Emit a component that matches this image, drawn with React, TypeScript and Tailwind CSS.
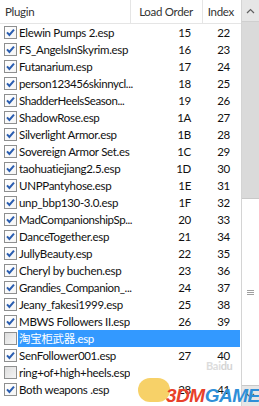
import React from 'react';

type Row = { name: string; on: boolean; order?: string; index?: string; selected?: boolean };

const rows: Row[] = [
  { name: 'Elewin Pumps 2.esp', on: true, order: '15', index: '22' },
  { name: 'FS_AngelsInSkyrim.esp', on: true, order: '16', index: '23' },
  { name: 'Futanarium.esp', on: true, order: '17', index: '24' },
  { name: 'person123456skinnycl...', on: true, order: '18', index: '25' },
  { name: 'ShadderHeelsSeason...', on: true, order: '19', index: '26' },
  { name: 'ShadowRose.esp', on: true, order: '1A', index: '27' },
  { name: 'Silverlight Armor.esp', on: true, order: '1B', index: '28' },
  { name: 'Sovereign Armor Set.esp', on: true, order: '1C', index: '29' },
  { name: 'taohuatiejiang2.5.esp', on: true, order: '1D', index: '30' },
  { name: 'UNPPantyhose.esp', on: true, order: '1E', index: '31' },
  { name: 'unp_bbp130-3.0.esp', on: true, order: '1F', index: '32' },
  { name: 'MadCompanionshipSp...', on: true, order: '20', index: '33' },
  { name: 'DanceTogether.esp', on: true, order: '21', index: '34' },
  { name: 'JullyBeauty.esp', on: true, order: '22', index: '35' },
  { name: 'Cheryl by buchen.esp', on: true, order: '23', index: '36' },
  { name: 'Grandies_Companion_...', on: true, order: '24', index: '37' },
  { name: 'Jeany_fakesi1999.esp', on: true, order: '25', index: '38' },
  { name: 'MBWS Followers II.esp', on: true, order: '26', index: '39' },
  { name: '淘宝柜武器.esp', on: false, selected: true },
  { name: 'SenFollower001.esp', on: true, order: '27', index: '40' },
  { name: 'ring+of+high+heels.esp', on: false },
  { name: 'Both weapons .esp', on: true, order: '28', index: '41' },
];

const CheckBox = ({ on }: { on: boolean }) => (
  <svg width="13" height="13" viewBox="0 0 13 13" className="shrink-0">
    <defs>
      <linearGradient id={on ? 'cbOn' : 'cbOff'} x1="0" y1="0" x2="1" y2="1">
        <stop offset="0" stopColor={on ? '#ffffff' : '#dcdcdc'} />
        <stop offset="1" stopColor={on ? '#f4f4f4' : '#f6f6f6'} />
      </linearGradient>
    </defs>
    <rect x="0.5" y="0.5" width="12" height="12" fill={`url(#${on ? 'cbOn' : 'cbOff'})`} stroke="#8e8f8f" />
    {on && <path d="M3 6.4 L5.4 9 L10 3.6" fill="none" stroke="#2a5db0" strokeWidth="2" />}
  </svg>
);

export default function App() {
  return (
    <div
      className="relative flex h-[406px] w-[259px] overflow-hidden bg-white text-[11.5px] tracking-[-0.3px] text-[#111]"
      style={{ fontFamily: 'Lato, "Noto Sans CJK SC", sans-serif' }}
    >
      <div className="flex w-[241px] flex-col">
        <div className="flex h-[24px] shrink-0 items-center whitespace-nowrap border-b border-[#e5e5e5] text-[#333]">
          <div className="flex h-full w-[131px] items-center border-r border-[#e5e5e5] pl-[5px]">Plugin</div>
          <div className="flex h-full w-[72px] items-center justify-end border-r border-[#e5e5e5] pr-[9px]">Load Order</div>
          <div className="flex h-full w-[37px] items-center justify-end pr-[6px]">Index</div>
        </div>
        {rows.map((r) => (
          <div key={r.name} className="flex h-[17px] shrink-0 items-center whitespace-nowrap">
            <div className="flex h-full w-[18px] items-center pl-[4px]">
              <CheckBox on={r.on} />
            </div>
            <div
              className={`flex h-full items-center ${r.selected ? 'w-[222px] bg-[#3399ff] text-white' : 'w-[113px]'}`}
            >
              <span
                className={`w-[112px] pl-[1px] ${r.name.endsWith('...') ? 'overflow-visible tracking-[-0.4px]' : 'overflow-hidden'}`}
              >
                {r.name}
              </span>
            </div>
            {!r.selected && (
              <>
                <div className="w-[66px] pr-[6px] text-right">{r.order}</div>
                <div className="w-[38px] pr-[5px] text-right">{r.index}</div>
              </>
            )}
          </div>
        ))}
      </div>

      <div className="flex w-[18px] flex-col border-l border-[#d4d4d4] bg-[#e8e8e8]">
        <div className="flex h-[22px] items-center justify-center border-b border-[#cfcfcf] bg-[#e6e6e6]">
          <svg width="9" height="6" viewBox="0 0 9 6">
            <path d="M1 5 L4.5 1.5 L8 5" fill="none" stroke="#606060" strokeWidth="1.2" />
          </svg>
        </div>
        <div className="h-[176px] bg-[#dadada]" />
        <div className="flex h-[188px] items-center justify-center border-y border-[#c8c8c8] bg-white">
          <svg width="7" height="7" viewBox="0 0 7 7">
            <path d="M0 1.5 H7 M0 3.5 H7 M0 5.5 H7" stroke="#a0a0a0" strokeWidth="1" />
          </svg>
        </div>
        <div className="flex flex-1 items-center justify-center bg-[#e6e6e6]">
          <svg width="9" height="6" viewBox="0 0 9 6">
            <path d="M1 1 L4.5 4.5 L8 1" fill="none" stroke="#606060" strokeWidth="1.2" />
          </svg>
        </div>
      </div>

      <div className="pointer-events-none absolute left-[206px] top-[360px] text-[11px] font-bold leading-none text-[#dcdcdc]">
        Bai<span className="text-[#d4d4d4]">du</span>
      </div>
      <div className="pointer-events-none absolute left-[138px] top-[378px] h-[24px] w-[32px] rounded-full bg-[#f5c542]/80" />
      <div
        className="pointer-events-none absolute left-[166px] top-[386px] text-[19px] font-black italic leading-none tracking-tight"
        style={{ fontFamily: '"Liberation Sans", sans-serif' }}
      >
        <span className="text-[#e8402a]">3DM</span>
        <span className="text-[#2f8fd8]">GAME</span>
      </div>
    </div>
  );
}
